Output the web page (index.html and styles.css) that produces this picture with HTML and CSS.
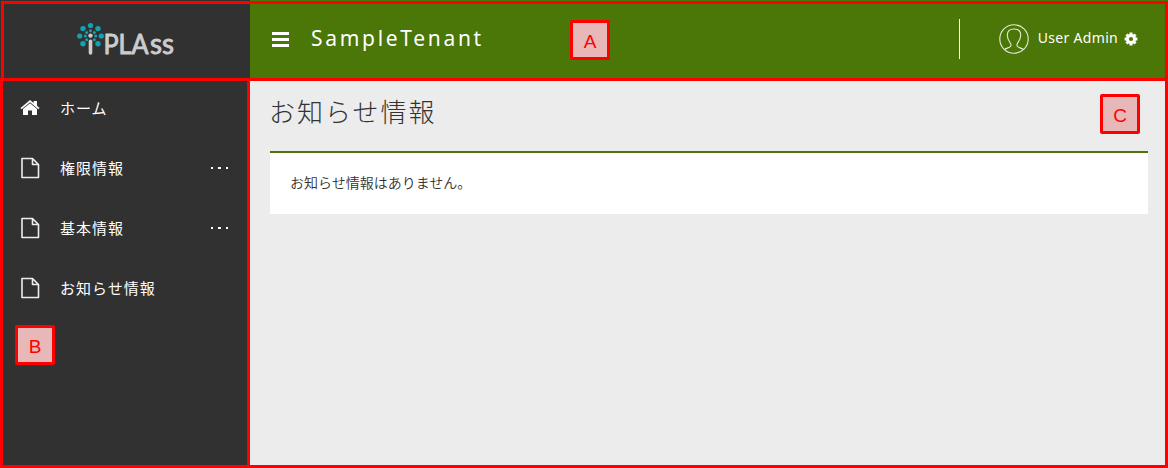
FILE: index.html
```html
<!DOCTYPE html>
<html lang="ja">
<head>
<meta charset="utf-8">
<title>SampleTenant</title>
<link rel="stylesheet" href="styles.css">
</head>
<body>
<div class="app">
  <header class="header">
    <div class="brand">
      <svg class="logo" width="110" height="48" viewBox="0 0 110 48">
        <g fill="#12a3b2">
          <circle cx="14.5" cy="5.500" r="2.600"/><circle cx="7" cy="8.600" r="2.700"/><circle cx="22" cy="8.600" r="2.700"/>
          <circle cx="3.700" cy="16" r="2.600"/><circle cx="25.300" cy="16" r="2.600"/><circle cx="7" cy="23.700" r="2.700"/><circle cx="22" cy="23.700" r="2.700"/>
          <circle cx="14.500" cy="10.800" r="1.500"/><circle cx="10.700" cy="12.500" r="1.500"/><circle cx="18.300" cy="12.500" r="1.500"/>
          <circle cx="9.300" cy="16" r="1.500"/><circle cx="19.700" cy="16" r="1.500"/><circle cx="10.700" cy="19.800" r="1.500"/><circle cx="18.300" cy="19.800" r="1.500"/>
        </g>
        <circle cx="14.500" cy="15.600" r="2.200" fill="#ccc"/>
        <path d="M14.500 21.200v11.700" stroke="#ccc" stroke-width="3.600" stroke-linecap="round"/>
        <text class="wordmark" x="27.500" y="34" textLength="45" lengthAdjust="spacingAndGlyphs">PLA</text>
        <text class="wordmark small" x="74" y="34" textLength="24" lengthAdjust="spacingAndGlyphs">ss</text>
      </svg>
    </div>
    <div class="toolbar">
      <div class="menu"><i></i><i></i><i></i></div>
      <h1 class="tenant">SampleTenant</h1>
      <div class="user">
        <svg width="30" height="30" viewBox="0 0 30 30" fill="none" stroke="#e6edda" stroke-width="1.100">
          <circle cx="15" cy="15" r="14.200"/>
          <path d="M5.500 25.500c1-1.300 5.300-1.600 6.200-3.200.6-1.200.2-2.500-.6-3.600-1.700-2.300-2.900-5.100-2.800-8 .2-3.700 2.800-5.700 6.700-5.700s6.500 2 6.700 5.700c.1 2.900-1.100 5.700-2.800 8-.8 1.100-1.200 2.400-.6 3.600.9 1.600 5.200 1.900 6.200 3.200"/>
        </svg>
        <span class="username">User Admin</span>
        <svg class="gear" width="14" height="14" viewBox="0 0 14 14">
          <g stroke="#fff" stroke-width="3"><path d="M7 .6v12.800M.6 7h12.800M2.500 2.500l9 9M11.500 2.500l-9 9"/></g>
          <circle cx="7" cy="7" r="5" fill="#fff"/><circle cx="7" cy="7" r="2.100" fill="#4b7608"/>
        </svg>
      </div>
    </div>
  </header>
  <div class="body">
    <nav class="side">
      <a class="item"><svg class="icon" width="20" height="20" viewBox="0 0 20 20"><path fill="#fff" d="M10 5.200 17 11v6h-5v-4.500H8V17H3v-6zM10 2l3.700 3.100V3H17v4.800l2.500 2.100-1.100 1.300L10 4.200l-8.400 7L.5 9.900z"/></svg><span>ホーム</span></a>
      <a class="item"><svg class="icon" width="20" height="22" viewBox="0 0 20 22"><path class="page" d="M2 1.500h10.500l6 6v13H2zM12.500 1.500v6h6"/></svg><span>権限情報</span><b class="dots"><i></i><i></i><i></i></b></a>
      <a class="item"><svg class="icon" width="20" height="22" viewBox="0 0 20 22"><path class="page" d="M2 1.500h10.500l6 6v13H2zM12.500 1.500v6h6"/></svg><span>基本情報</span><b class="dots"><i></i><i></i><i></i></b></a>
      <a class="item"><svg class="icon" width="20" height="22" viewBox="0 0 20 22"><path class="page" d="M2 1.500h10.500l6 6v13H2zM12.500 1.500v6h6"/></svg><span>お知らせ情報</span></a>
    </nav>
    <main class="main">
      <h2 class="title">お知らせ情報</h2>
      <div class="panel">お知らせ情報はありません。</div>
    </main>
  </div>
  <div class="frame frame-c"></div>
  <div class="frame frame-b"></div>
  <div class="frame frame-a"></div>
  <div class="tag tag-a">A</div>
  <div class="tag tag-b">B</div>
  <div class="tag tag-c">C</div>
</div>
</body>
</html>
```
FILE: styles.css
```css
* { box-sizing: border-box; }
body { margin: 0; font-family: "Noto Sans", "Noto Sans CJK JP", sans-serif; color: #333; }
.app { position: relative; width: 1168px; height: 468px; overflow: hidden; display: flex; flex-direction: column; background: #ececec; }
.header { display: flex; height: 80px; flex: none; }
.brand { width: 250px; background: #313131; padding: 20px 0 0 76px; }
.logo { display: block; }
.wordmark { font: 400 26px Lato, sans-serif; fill: #ccc; stroke: #ccc; stroke-width: .9; stroke-linejoin: round; }
.small { font-size: 28px; }
.toolbar { flex: 1; display: flex; align-items: center; background: #4b7608; color: #fff; padding: 0 29px 2px 22px; }
.menu { display: flex; flex-direction: column; gap: 3px; width: 17px; }
.menu i { height: 3px; background: #fff; }
.tenant { margin: 0 0 3px 22px; font: 400 21px "Noto Sans", sans-serif; letter-spacing: 2.700px; }
.user { margin-left: auto; display: flex; align-items: center; height: 40px; border-left: 1px solid #fff; padding-left: 39px; }
.username { font-size: 14px; letter-spacing: .3px; margin: 0 6px 3px 9px; }
.gear { margin-right: 1px; }
.body { display: flex; flex: 1; }
.side { width: 250px; background: #313131; }
.item { display: flex; align-items: center; height: 60px; padding: 0 22px 4px 20px; color: #fff; font-size: 15px; letter-spacing: 1px; }
.item .icon { margin-right: 20px; }
.item span { padding-bottom: 1px; }
.page { fill: none; stroke: #eee; stroke-width: 1.600; stroke-linejoin: round; }
.dots { margin-left: auto; display: flex; gap: 5px; }
.dots i { width: 2.500px; height: 2px; background: #fff; }
.main { flex: 1; padding: 12px 20px 0; }
.title { margin: 0 0 19px -1px; height: 40px; line-height: 40px; font-size: 26px; font-weight: 300; letter-spacing: 2px; }
.panel { height: 63px; border-top: 2px solid #4b7608; background: #fff; padding: 0 20px; line-height: 58px; font-family: "Noto Sans CJK JP", sans-serif; font-size: 14px; font-weight: 350; }
.frame { position: absolute; border: 3px solid red; }
.frame-a { left: 1px; top: 1px; width: 1167px; height: 80px; }
.frame-b { left: 0; top: 78px; width: 250px; height: 390px; }
.frame-c { left: 247px; top: 78px; width: 921px; height: 390px; }
.tag { position: absolute; width: 40px; height: 40px; border: 3px solid red; border-radius: 2px; background: #e8b8b8; color: red; font: 19px/37px "Liberation Sans", sans-serif; text-align: center; }
.tag-a { left: 570px; top: 20px; }
.tag-b { left: 15px; top: 325px; }
.tag-c { left: 1100px; top: 94px; }
```
